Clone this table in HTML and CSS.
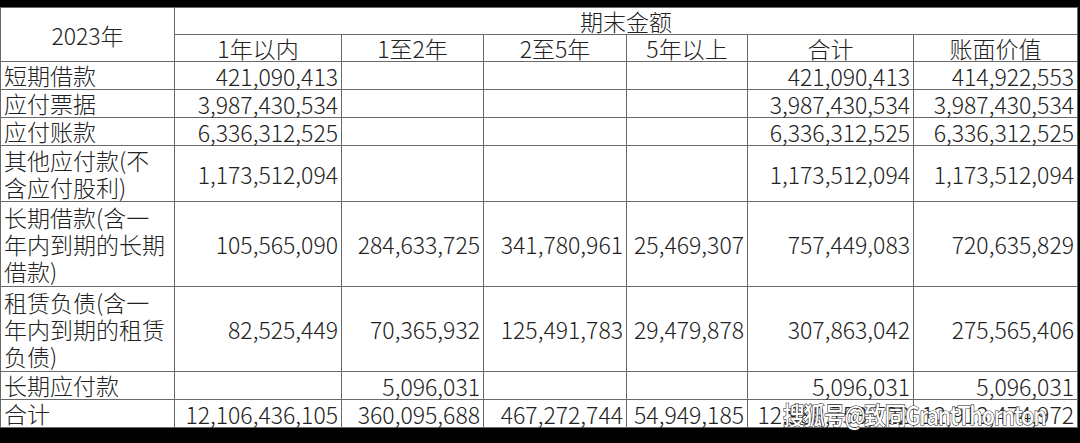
FILE: index.html
```html
<!DOCTYPE html>
<html lang="zh-CN">
<head>
<meta charset="utf-8">
<title>期末金额</title>
<link rel="stylesheet" href="styles.css">
</head>
<body>
<div class="frame">
  <div class="topbar"></div>
  <table class="sheet">
    <colgroup>
      <col class="c0"><col class="c1"><col class="c2"><col class="c3"><col class="c4"><col class="c5"><col class="c6">
    </colgroup>
    <tr class="r1">
      <td rowspan="2" class="ctr">2023年</td>
      <td colspan="6" class="ctr">期末金额</td>
    </tr>
    <tr class="r1">
      <td class="ctr">1年以内</td><td class="ctr">1至2年</td><td class="ctr">2至5年</td><td class="ctr">5年以上</td><td class="ctr">合计</td><td class="ctr">账面价值</td>
    </tr>
    <tr class="r1">
      <td class="lbl">短期借款</td><td class="num">421,090,413</td><td></td><td></td><td></td><td class="num">421,090,413</td><td class="num">414,922,553</td>
    </tr>
    <tr class="r1">
      <td class="lbl">应付票据</td><td class="num">3,987,430,534</td><td></td><td></td><td></td><td class="num">3,987,430,534</td><td class="num">3,987,430,534</td>
    </tr>
    <tr class="r1">
      <td class="lbl">应付账款</td><td class="num">6,336,312,525</td><td></td><td></td><td></td><td class="num">6,336,312,525</td><td class="num">6,336,312,525</td>
    </tr>
    <tr class="r2">
      <td class="lbl">其他应付款(不含应付股利)</td><td class="num">1,173,512,094</td><td></td><td></td><td></td><td class="num">1,173,512,094</td><td class="num">1,173,512,094</td>
    </tr>
    <tr class="r3">
      <td class="lbl">长期借款(含一年内到期的长期借款)</td><td class="num">105,565,090</td><td class="num">284,633,725</td><td class="num">341,780,961</td><td class="num">25,469,307</td><td class="num">757,449,083</td><td class="num">720,635,829</td>
    </tr>
    <tr class="r3">
      <td class="lbl">租赁负债(含一年内到期的租赁负债)</td><td class="num">82,525,449</td><td class="num">70,365,932</td><td class="num">125,491,783</td><td class="num">29,479,878</td><td class="num">307,863,042</td><td class="num">275,565,406</td>
    </tr>
    <tr class="r1">
      <td class="lbl">长期应付款</td><td></td><td class="num">5,096,031</td><td></td><td></td><td class="num">5,096,031</td><td class="num">5,096,031</td>
    </tr>
    <tr class="r1">
      <td class="lbl">合计</td><td class="num">12,106,436,105</td><td class="num">360,095,688</td><td class="num">467,272,744</td><td class="num">54,949,185</td><td class="num">12,988,753,722</td><td class="num">12,913,474,972</td>
    </tr>
  </table>
  <div class="watermark">搜狐号@致同GrantThornton</div>
</div>
</body>
</html>
```
FILE: styles.css
```css
html, body {
  margin: 0;
  padding: 0;
  background: #000;
}
.frame {
  position: relative;
  width: 1080px;
  height: 443px;
  background: #000;
  overflow: hidden;
}
.topbar {
  height: 7px;
  background: #000;
}
.sheet {
  border-collapse: collapse;
  table-layout: fixed;
  width: 1077px;
  background: #fff;
  font-family: "Noto Sans CJK SC", "Noto Sans", sans-serif;
  font-weight: 300;
  font-size: 23px;
  color: #222;
}
.sheet td {
  border: 1px solid #6a6a6a;
  padding: 0 3px;
  line-height: 26px;
  vertical-align: middle;
  white-space: normal;
  word-break: break-all;
}
.c0 { width: 174px; }
.c1 { width: 167px; }
.c2 { width: 142px; }
.c3 { width: 143px; }
.c4 { width: 121px; }
.c5 { width: 166px; }
.c6 { width: 164px; }
.r1 { height: 27px; }
.r2 { height: 56px; }
.r3 { height: 85px; }
.sheet .ctr { text-align: center; }
.sheet .num { text-align: right; white-space: nowrap; }
.sheet .lbl { text-align: left; line-height: 27px; }
.watermark {
  position: absolute;
  left: 783px;
  top: 396px;
  font-family: "Noto Sans CJK SC", "Noto Sans", sans-serif;
  font-size: 25px;
  font-weight: 500;
  color: #fff;
  letter-spacing: -1.2px;
  -webkit-text-stroke: 1.2px #222;
  paint-order: stroke fill;
  white-space: nowrap;
  transform: scaleX(0.86);
  transform-origin: left top;
}
```
